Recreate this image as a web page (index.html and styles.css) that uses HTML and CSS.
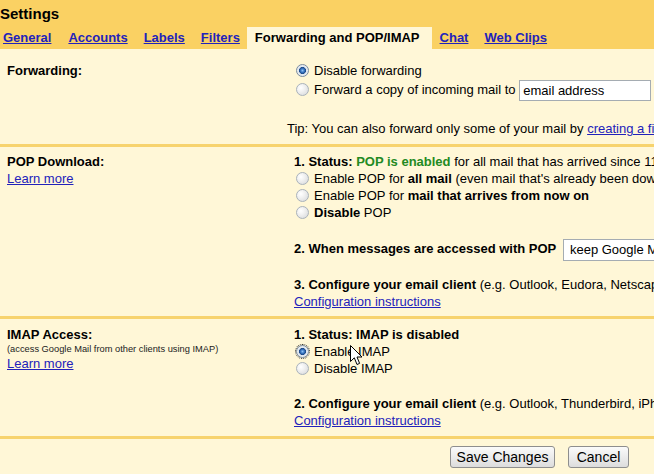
FILE: index.html
```html
<!DOCTYPE html>
<html>
<head>
<meta charset="utf-8">
<link rel="stylesheet" href="styles.css">
</head>
<body>
<div class="page">
  <div class="header">
    <h1 class="title">Settings</h1>
    <div class="tabs">
      <a class="tab first" href="#">General</a>
      <a class="tab" href="#">Accounts</a>
      <a class="tab" href="#">Labels</a>
      <a class="tab" href="#">Filters</a>
      <span class="tab active">Forwarding and POP/IMAP</span>
      <a class="tab" href="#">Chat</a>
      <a class="tab" href="#">Web Clips</a>
    </div>
  </div>

  <div class="section sec-fwd">
    <div class="left">
      <div class="label">Forwarding:</div>
    </div>
    <div class="right">
      <label class="row"><input type="radio" class="radio" name="fwd" checked>Disable forwarding</label>
      <label class="row tall"><input type="radio" class="radio" name="fwd">Forward a copy of incoming mail to <input class="textbox" type="text" value="email address"></label>
      <div class="row tip">Tip: You can also forward only some of your mail by <a href="#">creating a filter!</a></div>
    </div>
  </div>

  <div class="section sec-pop">
    <div class="left">
      <div class="label">POP Download:</div>
      <a href="#" class="learn">Learn more</a>
    </div>
    <div class="right">
      <div class="row"><b>1. Status: <span class="green">POP is enabled</span></b> for all mail that has arrived since 11/13/07</div>
      <label class="row"><input type="radio" class="radio" name="pop">Enable POP for <b>all mail</b> (even mail that's already been downloaded)</label>
      <label class="row"><input type="radio" class="radio" name="pop">Enable POP for <b>mail that arrives from now on</b></label>
      <label class="row"><input type="radio" class="radio" name="pop"><b>Disable</b> POP</label>
      <div class="row tall step2"><b>2. When messages are accessed with POP</b> <select class="select"><option>keep Google Mail's copy in the Inbox</option></select></div>
      <div class="row step3"><b>3. Configure your email client</b> (e.g. Outlook, Eudora, Netscape Mail)</div>
      <div class="row"><a href="#">Configuration instructions</a></div>
    </div>
  </div>

  <div class="section sec-imap">
    <div class="left">
      <div class="label">IMAP Access:</div>
      <div class="small">(access Google Mail from other clients using IMAP)</div>
      <a href="#" class="learn">Learn more</a>
    </div>
    <div class="right">
      <div class="row"><b>1. Status: IMAP is disabled</b></div>
      <label class="row"><input type="radio" class="radio focus" name="imap" checked>Enable IMAP</label>
      <label class="row"><input type="radio" class="radio" name="imap">Disable IMAP</label>
      <div class="row step3b"><b>2. Configure your email client</b> (e.g. Outlook, Thunderbird, iPhone)</div>
      <div class="row"><a href="#">Configuration instructions</a></div>
    </div>
  </div>

  <div class="buttons">
    <button class="btn save">Save Changes</button>
    <button class="btn cancel">Cancel</button>
  </div>

  <svg class="cursor" width="13" height="21" viewBox="0 0 13 21">
    <path d="M0.5 0.5 L0.5 16.5 L4.3 12.8 L7 19.5 L9.6 18.4 L7 12 L12 12 Z" fill="#fff" stroke="#000" stroke-width="1"/>
  </svg>
</div>
</body>
</html>
```

FILE: styles.css
```css
html, body {
  margin: 0;
  padding: 0;
  overflow: hidden;
  background: #fff7d7;
}
body {
  font-family: "Liberation Sans", Arial, sans-serif;
  font-size: 13px;
  color: #000;
}
.page {
  position: relative;
  width: 960px;
}
a {
  color: #2222bb;
  text-decoration: underline;
}
.header {
  background: #fad163;
  padding-top: 4px;
}
.title {
  margin: 0;
  font-size: 15px;
  line-height: 20px;
  font-weight: bold;
}
.tabs {
  display: flex;
  margin-top: 3px;
  height: 22px;
}
.tab {
  font-weight: bold;
  line-height: 22px;
  padding: 0 8px;
  white-space: nowrap;
}
.tab.first {
  padding-left: 3px;
  padding-right: 9px;
}
.tab.active {
  background: #fff7d7;
  color: #000;
  padding: 0 12px 0 8px;
  margin-left: -1px;
}
.section {
  display: grid;
  grid-template-columns: 294px 1fr;
  border-bottom: 3px solid #f7d36e;
  line-height: 17px;
}
.sec-fwd { padding: 13px 0 7px; }
.sec-pop { padding: 6px 0 6px; }
.sec-imap { padding: 7px 0 7px; }
.left {
  padding-left: 7px;
}
.label {
  font-weight: bold;
}
.small {
  font-size: 9.3px;
  line-height: 12px;
  color: #222;
}
.learn {
  display: inline-block;
}
.right {
  white-space: nowrap;
}
.row {
  display: block;
  height: 17px;
  line-height: 17px;
}
.row.tall {
  height: 22px;
  line-height: 22px;
}
.tip {
  margin-top: 19px;
  margin-left: -7px;
}
.step2 { margin-top: 17px; }
.step3 { margin-top: 16px; }
.step3b { margin-top: 18px; }
.green {
  color: #238a23;
}
.radio {
  -webkit-appearance: none;
  appearance: none;
  display: inline-block;
  vertical-align: -2px;
  width: 13px;
  height: 13px;
  margin: 0 5px 0 2px;
  border-radius: 50%;
  border: 1px solid #a9b2bb;
  background: radial-gradient(circle at 35% 35%, #ffffff 0, #f2f2f2 35%, #d4d6d8 100%);
  box-sizing: border-box;
}
.radio:checked {
  border-color: #7b8b9c;
  background: radial-gradient(circle at 50% 50%, #8ec0f2 0, #3a78c4 1.8px, #1d4a8a 3.2px, #dfe6ee 3.8px, #f4f6f8 100%);
}
.radio.focus {
  outline: 1px dotted #333;
  outline-offset: 0;
}
.textbox {
  font-family: "Liberation Sans", Arial, sans-serif;
  font-size: 13px;
  width: 132px;
  height: 21px;
  box-sizing: border-box;
  border: 1px solid #a5acb2;
  background: #fff;
  padding: 0 3px;
  margin: 0;
  vertical-align: middle;
  color: #000;
}
.select {
  -webkit-appearance: none;
  appearance: none;
  font-family: "Liberation Sans", Arial, sans-serif;
  font-size: 13px;
  height: 22px;
  width: 260px;
  box-sizing: border-box;
  border: 1px solid #a5acb2;
  background: #fff;
  padding: 0 6px;
  margin-left: 3px;
  vertical-align: middle;
  color: #000;
}
.buttons {
  display: flex;
  gap: 13px;
  padding: 7px 0 0 450px;
}
.btn {
  font-family: "Liberation Sans", Arial, sans-serif;
  font-size: 14px;
  height: 22px;
  padding: 0;
  border: 1px solid #8e8e8e;
  border-radius: 3px;
  background: linear-gradient(#fbfbfb, #e9e9e9 60%, #dcdcdc);
  color: #000;
  line-height: 20px;
  white-space: nowrap;
  text-align: center;
  flex: none;
}
.btn.save {
  width: 105px;
}
.btn.cancel {
  width: 61px;
}
.cursor {
  position: absolute;
  left: 350px;
  top: 345px;
}
```
